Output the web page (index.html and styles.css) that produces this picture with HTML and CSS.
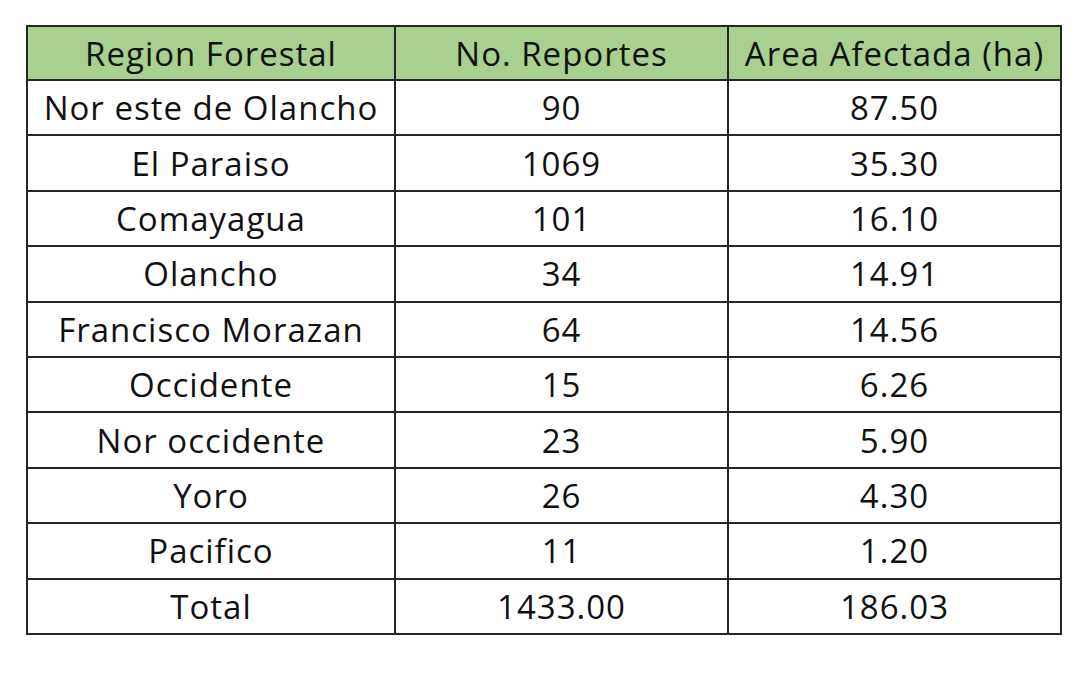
FILE: index.html
```html
<!DOCTYPE html>
<html>
<head>
<meta charset="utf-8">
<link rel="stylesheet" href="styles.css">
</head>
<body>
<table class="data">
  <colgroup>
    <col class="c1"><col class="c2"><col class="c3">
  </colgroup>
  <thead>
    <tr><th>Region Forestal</th><th>No. Reportes</th><th>Area Afectada (ha)</th></tr>
  </thead>
  <tbody>
    <tr><td>Nor este de Olancho</td><td>90</td><td>87.50</td></tr>
    <tr><td>El Paraiso</td><td>1069</td><td>35.30</td></tr>
    <tr><td>Comayagua</td><td>101</td><td>16.10</td></tr>
    <tr><td>Olancho</td><td>34</td><td>14.91</td></tr>
    <tr><td>Francisco Morazan</td><td>64</td><td>14.56</td></tr>
    <tr><td>Occidente</td><td>15</td><td>6.26</td></tr>
    <tr><td>Nor occidente</td><td>23</td><td>5.90</td></tr>
    <tr><td>Yoro</td><td>26</td><td>4.30</td></tr>
    <tr><td>Pacifico</td><td>11</td><td>1.20</td></tr>
    <tr><td>Total</td><td>1433.00</td><td>186.03</td></tr>
  </tbody>
</table>
</body>
</html>
```

FILE: styles.css
```css
html, body {
  background: #ffffff;
}
body {
  margin: 0;
  padding: 25px 0 0 26px;
  font-family: "Open Sans", "Lato", sans-serif;
  color: #111;
}
.data {
  border-collapse: collapse;
  width: 1034px;
  table-layout: fixed;
}
.c1 { width: 368px; }
.c2 { width: 333px; }
.c3 { width: 333px; }
.data th, .data td {
  border: 2px solid #262626;
  height: 53.4px;
  padding: 0;
  text-align: center;
  vertical-align: middle;
  font-size: 33px;
  letter-spacing: 1px;
  font-weight: normal;
  line-height: 1;
  white-space: nowrap;
}
.data th {
  background: #a9d08e;
  height: 52px;
}
```
